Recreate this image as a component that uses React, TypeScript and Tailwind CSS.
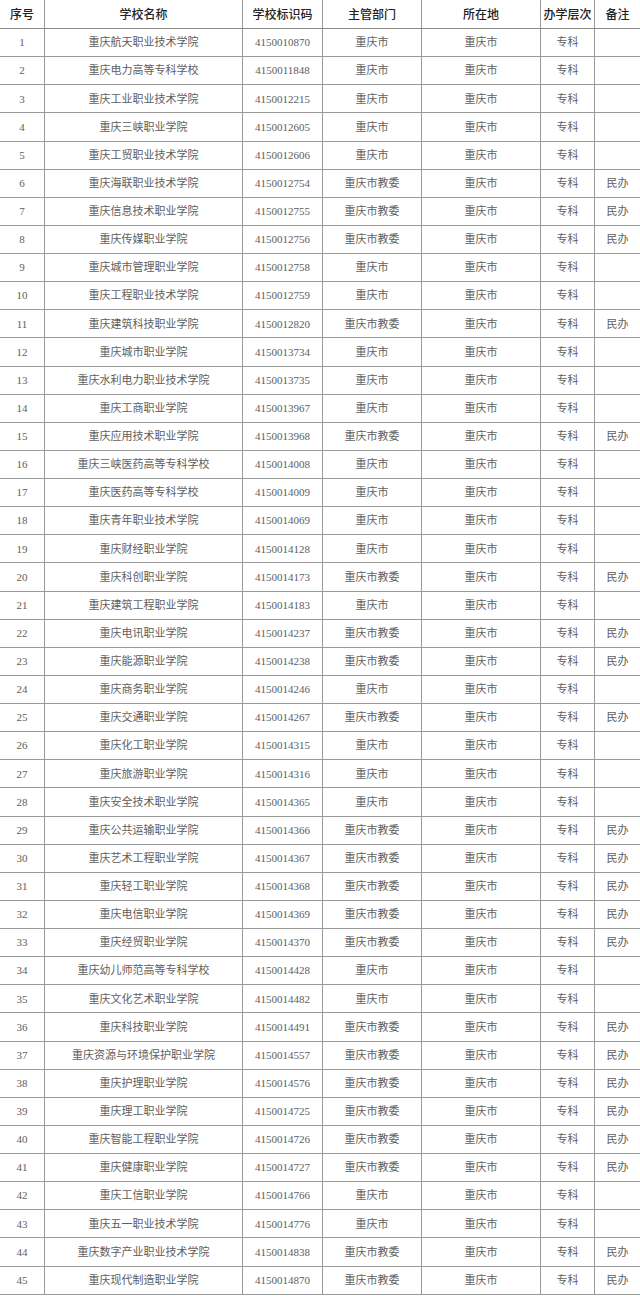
type Row = [string, string, boolean];

// name, code, 民办 (managed by 重庆市教委)
const rows: Row[] = [
  ["重庆航天职业技术学院", "4150010870", false],
  ["重庆电力高等专科学校", "4150011848", false],
  ["重庆工业职业技术学院", "4150012215", false],
  ["重庆三峡职业学院", "4150012605", false],
  ["重庆工贸职业技术学院", "4150012606", false],
  ["重庆海联职业技术学院", "4150012754", true],
  ["重庆信息技术职业学院", "4150012755", true],
  ["重庆传媒职业学院", "4150012756", true],
  ["重庆城市管理职业学院", "4150012758", false],
  ["重庆工程职业技术学院", "4150012759", false],
  ["重庆建筑科技职业学院", "4150012820", true],
  ["重庆城市职业学院", "4150013734", false],
  ["重庆水利电力职业技术学院", "4150013735", false],
  ["重庆工商职业学院", "4150013967", false],
  ["重庆应用技术职业学院", "4150013968", true],
  ["重庆三峡医药高等专科学校", "4150014008", false],
  ["重庆医药高等专科学校", "4150014009", false],
  ["重庆青年职业技术学院", "4150014069", false],
  ["重庆财经职业学院", "4150014128", false],
  ["重庆科创职业学院", "4150014173", true],
  ["重庆建筑工程职业学院", "4150014183", false],
  ["重庆电讯职业学院", "4150014237", true],
  ["重庆能源职业学院", "4150014238", true],
  ["重庆商务职业学院", "4150014246", false],
  ["重庆交通职业学院", "4150014267", true],
  ["重庆化工职业学院", "4150014315", false],
  ["重庆旅游职业学院", "4150014316", false],
  ["重庆安全技术职业学院", "4150014365", false],
  ["重庆公共运输职业学院", "4150014366", true],
  ["重庆艺术工程职业学院", "4150014367", true],
  ["重庆轻工职业学院", "4150014368", true],
  ["重庆电信职业学院", "4150014369", true],
  ["重庆经贸职业学院", "4150014370", true],
  ["重庆幼儿师范高等专科学校", "4150014428", false],
  ["重庆文化艺术职业学院", "4150014482", false],
  ["重庆科技职业学院", "4150014491", true],
  ["重庆资源与环境保护职业学院", "4150014557", true],
  ["重庆护理职业学院", "4150014576", true],
  ["重庆理工职业学院", "4150014725", true],
  ["重庆智能工程职业学院", "4150014726", true],
  ["重庆健康职业学院", "4150014727", true],
  ["重庆工信职业学院", "4150014766", false],
  ["重庆五一职业技术学院", "4150014776", false],
  ["重庆数字产业职业技术学院", "4150014838", true],
  ["重庆现代制造职业学院", "4150014870", true],
];

const cols = "grid grid-cols-[45px_198px_80px_99px_119px_54px_45px]";
const cell = "flex items-center justify-center border-r border-[#9a9a9a]";

const headers = ["序号", "学校名称", "学校标识码", "主管部门", "所在地", "办学层次", "备注"];

export default function App() {
  return (
    <div className="w-[640px] h-[1298px] bg-white overflow-hidden">
      <div
        className={`${cols} h-[29px] border-b border-[#8a8a8a] text-[12px] font-medium text-[#222]`}
        style={{ fontFamily: '"Noto Sans CJK SC", sans-serif' }}
      >
        {headers.map((h, i) => (
          <div key={h} className={i === 6 ? "flex items-center justify-center" : cell}>
            {h}
          </div>
        ))}
      </div>
      {rows.map(([name, code, minban], i) => (
        <div
          key={code}
          className={`${cols} h-[28.13px] border-b border-[#9a9a9a] text-[11px] text-[#5e5e5e]`}
          style={{ fontFamily: '"Liberation Serif", "Noto Sans CJK SC", serif' }}
        >
          <div className={cell}>{i + 1}</div>
          <div className={cell}>{name}</div>
          <div className={cell}>{code}</div>
          <div className={cell}>{minban ? "重庆市教委" : "重庆市"}</div>
          <div className={cell}>重庆市</div>
          <div className={cell}>专科</div>
          <div className="flex items-center justify-center">{minban ? "民办" : ""}</div>
        </div>
      ))}
    </div>
  );
}
